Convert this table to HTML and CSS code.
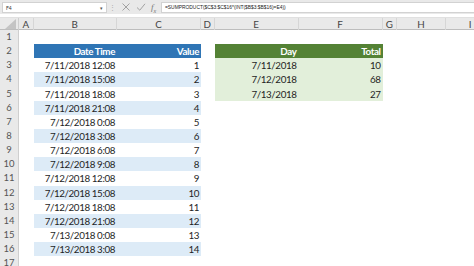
FILE: index.html
```html
<!DOCTYPE html>
<html>
<head>
<meta charset="utf-8">
<link rel="stylesheet" href="styles.css">
</head>
<body>
<div class="fbar">
  <div class="namebox"><span class="nb-text">F4</span><span class="nb-arrow">▾</span></div>
  <div class="fsep">⋮</div>
  <div class="ficons">
    <svg class="ic" width="10" height="10" viewBox="0 0 10 10"><path d="M1.5 1.5 L8.5 8.5 M8.5 1.5 L1.5 8.5" stroke="#9a9a9a" stroke-width="0.9" fill="none"/></svg>
    <svg class="ic" width="10" height="10" viewBox="0 0 10 10"><path d="M1 5.5 L3.8 8.2 L9 1.8" stroke="#9a9a9a" stroke-width="0.9" fill="none"/></svg>
    <span class="fx">f<sub>x</sub></span>
  </div>
  <div class="formula">=SUMPRODUCT($C$3:$C$16*(INT($B$3:$B$16)=E4))</div>
</div>
<div class="sheet">
  <div class="hrow">
    <div class="corner"><svg width="12" height="10" viewBox="0 0 12 10"><path d="M12 0 L12 10 L1 10 Z" fill="#c4c4c4"/></svg></div>
    <div class="ch">A</div><div class="ch">B</div><div class="ch">C</div><div class="ch">D</div><div class="ch">E</div><div class="ch">F</div><div class="ch">G</div><div class="ch">H</div><div class="ch">I</div>
  </div>
  <div class="row"><div class="rh">1</div><div></div><div></div><div></div><div></div><div></div><div></div><div></div><div></div><div></div></div>
  <div class="row"><div class="rh">2</div><div></div><div class="c bh">Date Time</div><div class="c bh">Value</div><div></div><div class="c gh">Day</div><div class="c gh">Total</div><div></div><div></div><div></div></div>
  <div class="row"><div class="rh">3</div><div></div><div class="c">7/11/2018 12:08</div><div class="c">1</div><div></div><div class="c gl">7/11/2018</div><div class="c gl">10</div><div></div><div></div><div></div></div>
  <div class="row"><div class="rh">4</div><div></div><div class="c bl">7/11/2018 15:08</div><div class="c bl">2</div><div></div><div class="c gl">7/12/2018</div><div class="c gl">68</div><div></div><div></div><div></div></div>
  <div class="row"><div class="rh">5</div><div></div><div class="c">7/11/2018 18:08</div><div class="c">3</div><div></div><div class="c gl">7/13/2018</div><div class="c gl">27</div><div></div><div></div><div></div></div>
  <div class="row"><div class="rh">6</div><div></div><div class="c bl">7/11/2018 21:08</div><div class="c bl">4</div><div></div><div></div><div></div><div></div><div></div><div></div></div>
  <div class="row"><div class="rh">7</div><div></div><div class="c">7/12/2018 0:08</div><div class="c">5</div><div></div><div></div><div></div><div></div><div></div><div></div></div>
  <div class="row"><div class="rh">8</div><div></div><div class="c bl">7/12/2018 3:08</div><div class="c bl">6</div><div></div><div></div><div></div><div></div><div></div><div></div></div>
  <div class="row"><div class="rh">9</div><div></div><div class="c">7/12/2018 6:08</div><div class="c">7</div><div></div><div></div><div></div><div></div><div></div><div></div></div>
  <div class="row"><div class="rh">10</div><div></div><div class="c bl">7/12/2018 9:08</div><div class="c bl">8</div><div></div><div></div><div></div><div></div><div></div><div></div></div>
  <div class="row"><div class="rh">11</div><div></div><div class="c">7/12/2018 12:08</div><div class="c">9</div><div></div><div></div><div></div><div></div><div></div><div></div></div>
  <div class="row"><div class="rh">12</div><div></div><div class="c bl">7/12/2018 15:08</div><div class="c bl">10</div><div></div><div></div><div></div><div></div><div></div><div></div></div>
  <div class="row"><div class="rh">13</div><div></div><div class="c">7/12/2018 18:08</div><div class="c">11</div><div></div><div></div><div></div><div></div><div></div><div></div></div>
  <div class="row"><div class="rh">14</div><div></div><div class="c bl">7/12/2018 21:08</div><div class="c bl">12</div><div></div><div></div><div></div><div></div><div></div><div></div></div>
  <div class="row"><div class="rh">15</div><div></div><div class="c">7/13/2018 0:08</div><div class="c">13</div><div></div><div></div><div></div><div></div><div></div><div></div></div>
  <div class="row"><div class="rh">16</div><div></div><div class="c bl">7/13/2018 3:08</div><div class="c bl">14</div><div></div><div></div><div></div><div></div><div></div><div></div></div>
  <div class="row"><div class="rh">17</div><div></div><div></div><div></div><div></div><div></div><div></div><div></div><div></div><div></div></div>
</div>
</body>
</html>
```

FILE: styles.css
```css
html, body {
  margin: 0;
  padding: 0;
}
body {
  width: 474px;
  height: 266px;
  overflow: hidden;
  background: #ffffff;
  font-family: Lato, "Liberation Sans", sans-serif;
  color: #222;
}
.fbar {
  height: 14px;
  background: #e9e9e9;
  display: flex;
  align-items: center;
  padding-top: 1px;
  box-sizing: border-box;
}
.namebox {
  width: 105px;
  height: 11px;
  margin-left: 2px;
  background: #fff;
  border: 1px solid #d2d2d2;
  box-sizing: border-box;
  display: flex;
  align-items: center;
  justify-content: space-between;
  padding: 0 3px 0 3px;
  font-size: 5px;
  color: #333;
}
.nb-arrow {
  font-size: 5px;
  color: #555;
}
.fsep {
  width: 10px;
  text-align: center;
  font-size: 7px;
  color: #aaa;
}
.ficons {
  display: flex;
  align-items: center;
  gap: 5px;
  width: 44px;
  padding-left: 4px;
  box-sizing: border-box;
}
.fx {
  font-family: "Liberation Serif", serif;
  font-style: italic;
  font-size: 9px;
  color: #777;
}
.fx sub {
  font-size: 6px;
}
.formula {
  flex: 1;
  height: 11px;
  background: #fff;
  border: 1px solid #d2d2d2;
  border-right: none;
  box-sizing: border-box;
  font-family: "Liberation Sans", sans-serif;
  font-size: 4.9px;
  line-height: 9px;
  padding-left: 3px;
  color: #222;
  white-space: nowrap;
  overflow: hidden;
}
.sheet {
  padding-top: 3px;
  background: #fff;
}
.hrow, .row {
  display: grid;
  grid-template-columns: 19px 14.5px 83.5px 84px 13.5px 84px 84px 14.5px 49px 49px 20px;
}
.hrow {
  height: 13px;
  background: #e9e9e9;
  border-top: 1px solid #e0e0e0;
  border-bottom: 1px solid #bdbdbd;
  box-sizing: border-box;
}
.corner {
  display: flex;
  align-items: flex-end;
  justify-content: flex-end;
  padding: 0 2px 1px 0;
  border-right: 1px solid #cfcfcf;
}
.ch {
  font-size: 9.8px;
  line-height: 12px;
  text-align: center;
  color: #444;
  border-right: 1px solid #d6d6d6;
}
.row {
  height: 14.15px;
  font-size: 9.8px;
  letter-spacing: -0.4px;
  line-height: 14.15px;
}
.rh {
  background: #e9e9e9;
  border-right: 1px solid #cfcfcf;
  text-align: center;
  color: #555;
  font-size: 9.5px;
  letter-spacing: 0;
}
.c {
  text-align: right;
  padding-right: 2px;
  white-space: nowrap;
  color: #1e1e1e;
}
.bh {
  background: #2f75b5;
  color: #fff;
  font-weight: bold;
}
.bl {
  background: #ddebf7;
}
.gh {
  background: #548235;
  color: #fff;
  font-weight: bold;
}
.gl {
  background: #e2efda;
}
```
